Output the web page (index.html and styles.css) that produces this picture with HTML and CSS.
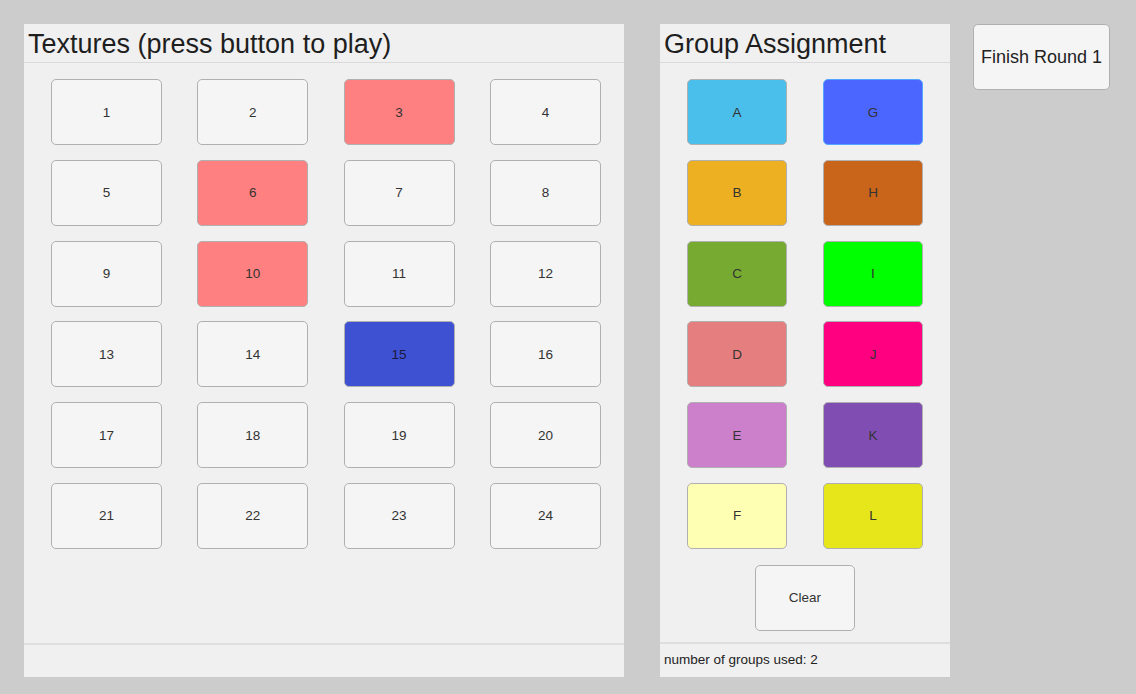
FILE: index.html
```html
<!DOCTYPE html>
<html lang="en">
<head>
  <meta charset="UTF-8">
  <title>Texture Grouping</title>
  <link rel="stylesheet" href="styles.css">
</head>
<body>

<div class="panel textures-panel">
  <div class="panel-title">Textures (press button to play)</div>
  <div class="panel-body">
    <div class="texture-grid">
      <button class="btn">1</button>
      <button class="btn">2</button>
      <button class="btn pink">3</button>
      <button class="btn">4</button>
      <button class="btn">5</button>
      <button class="btn pink">6</button>
      <button class="btn">7</button>
      <button class="btn">8</button>
      <button class="btn">9</button>
      <button class="btn pink">10</button>
      <button class="btn">11</button>
      <button class="btn">12</button>
      <button class="btn">13</button>
      <button class="btn">14</button>
      <button class="btn blue">15</button>
      <button class="btn">16</button>
      <button class="btn">17</button>
      <button class="btn">18</button>
      <button class="btn">19</button>
      <button class="btn">20</button>
      <button class="btn">21</button>
      <button class="btn">22</button>
      <button class="btn">23</button>
      <button class="btn">24</button>
    </div>
  </div>
  <div class="panel-footer"></div>
</div>

<div class="panel group-panel">
  <div class="panel-title">Group Assignment</div>
  <div class="panel-body group-body">
    <div class="group-grid">
      <button class="btn group-a">A</button>
      <button class="btn group-g">G</button>
      <button class="btn group-b">B</button>
      <button class="btn group-h">H</button>
      <button class="btn group-c">C</button>
      <button class="btn group-i">I</button>
      <button class="btn group-d">D</button>
      <button class="btn group-j">J</button>
      <button class="btn group-e">E</button>
      <button class="btn group-k">K</button>
      <button class="btn group-f">F</button>
      <button class="btn group-l">L</button>
    </div>
    <button class="btn clear-btn">Clear</button>
  </div>
  <div class="panel-footer">number of groups used: 2</div>
</div>

<button class="btn finish-btn">Finish Round 1</button>

</body>
</html>
```

FILE: styles.css
```css
body {
  margin: 0;
  padding: 24px;
  display: flex;
  align-items: flex-start;
  font-family: "Liberation Sans", Arial, sans-serif;
  background-color: #cccccc;
  color: #222;
  height: 694px;
  box-sizing: border-box;
}

.panel {
  display: flex;
  flex-direction: column;
  height: 653px;
  background-color: #f0f0f0;
}

.textures-panel {
  width: 600px;
  margin-right: 36px;
}

.group-panel {
  width: 290px;
  margin-right: 23px;
}

.panel-title {
  height: 38px;
  line-height: 40px;
  padding-left: 4px;
  font-size: 27px;
  color: #1e1e1e;
  border-bottom: 1px solid #dadada;
  white-space: nowrap;
}

.panel-body {
  flex: 1;
  padding-top: 16px;
}

.panel-footer {
  height: 32px;
  border-top: 2px solid #dedede;
  font-size: 13.5px;
  line-height: 32px;
  padding-left: 4px;
  color: #222;
}

.group-panel .panel-footer {
  height: 33px;
}

.btn {
  font-family: "Liberation Sans", Arial, sans-serif;
  font-size: 13.5px;
  color: #333;
  background-color: #f5f5f5;
  border: 1px solid #b0b0b0;
  border-radius: 5px;
  padding: 0;
  height: 66px;
  cursor: pointer;
}

.texture-grid {
  display: grid;
  grid-template-columns: repeat(4, 111px);
  column-gap: 35.3px;
  row-gap: 14.8px;
  margin-left: 27px;
}

.pink {
  background-color: #ff8080;
}

.blue {
  background-color: #3f51d3;
  color: #1a1a3a;
}

.group-body {
  display: flex;
  flex-direction: column;
  align-items: center;
}

.group-grid {
  display: grid;
  grid-template-columns: repeat(2, 100px);
  column-gap: 36px;
  row-gap: 14.8px;
}

.clear-btn {
  width: 100px;
  margin-top: 16px;
}

.group-a { background-color: #4bbfeb; }
.group-g { background-color: #4b66ff; border-color: #52a6ff; }
.group-b { background-color: #ecb022; }
.group-h { background-color: #c8651b; }
.group-c { background-color: #77aa30; }
.group-i { background-color: #00ff00; }
.group-d { background-color: #e57f7f; }
.group-j { background-color: #ff0080; }
.group-e { background-color: #cc80cc; }
.group-k { background-color: #804eb2; }
.group-f { background-color: #ffffb3; }
.group-l { background-color: #e6e61a; }

.finish-btn {
  width: 137px;
  font-size: 18px;
  color: #222;
}
```
